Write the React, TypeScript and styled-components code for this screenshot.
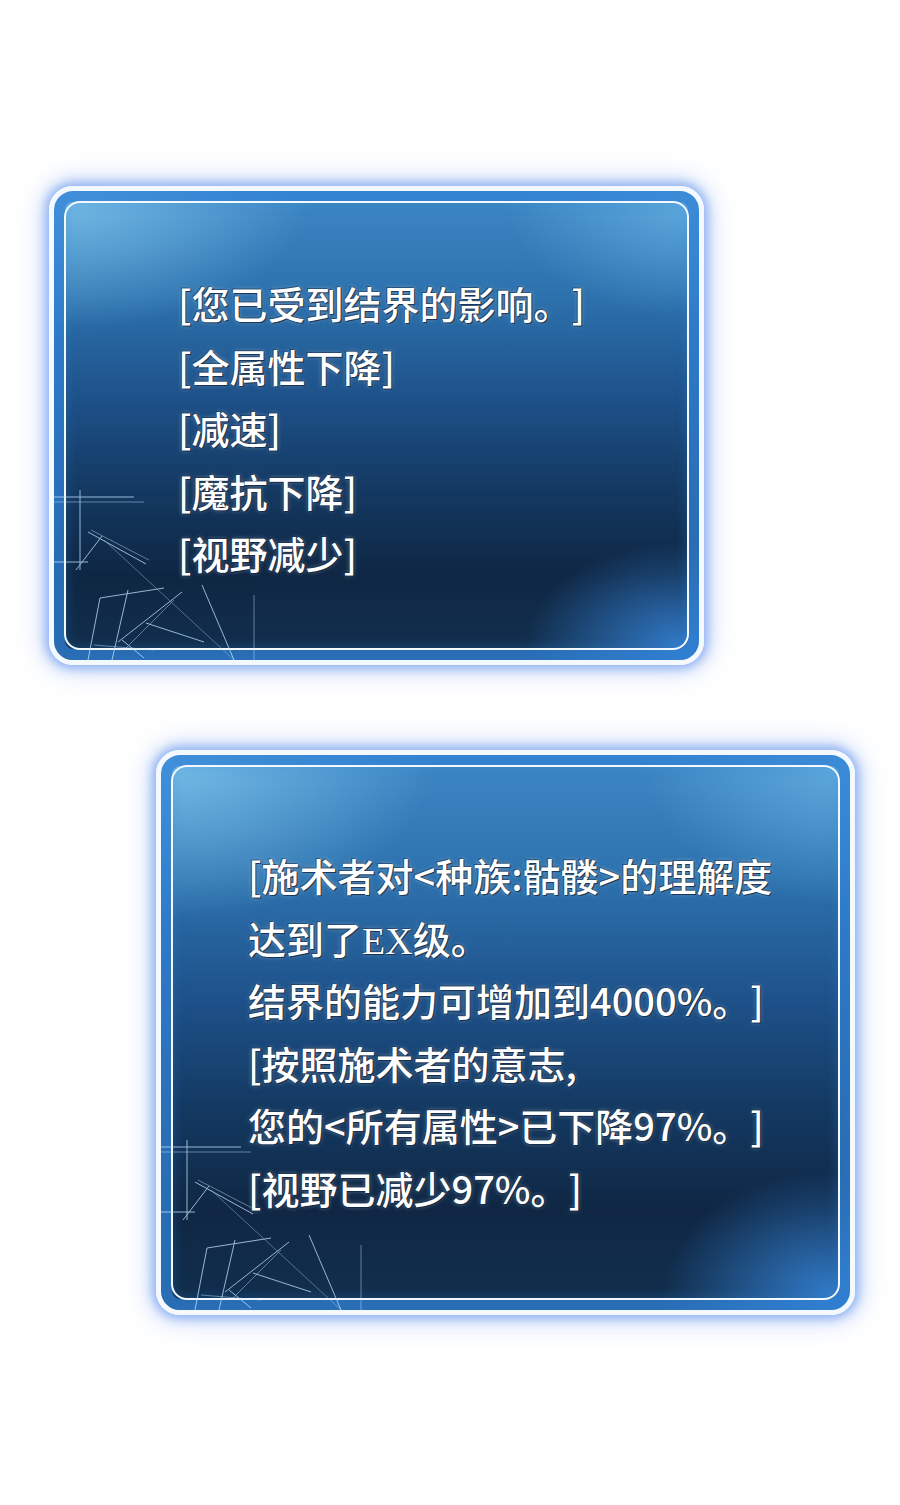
import React, { FC } from 'react';
import styled, { createGlobalStyle } from 'styled-components';

const GlobalStyle = createGlobalStyle`
	html, body {
		margin: 0;
		padding: 0;
		background: #ffffff;
	}
	body {
		font-family: 'Noto Sans CJK SC', 'Noto Sans', sans-serif;
	}
`;

const Page = styled.div`
	width: 900px;
	height: 1505px;
	box-sizing: border-box;
	padding-top: 186px;
	display: flex;
	flex-direction: column;
	gap: 85px;
	background: #ffffff;
	overflow: hidden;
`;

const Panel = styled.div<{ $left: number; $width: number; $height: number; $padTop: number; $padLeft: number }>`
	position: relative;
	box-sizing: border-box;
	margin-left: ${(p) => p.$left}px;
	width: ${(p) => p.$width}px;
	height: ${(p) => p.$height}px;
	padding: ${(p) => p.$padTop}px 20px 0 ${(p) => p.$padLeft}px;
	border: 5px solid #f3f9ff;
	border-radius: 24px;
	box-shadow:
		0 0 10px 4px rgba(90, 140, 235, 0.55),
		0 0 24px 8px rgba(120, 160, 240, 0.35),
		inset 0 0 0 11px rgba(48, 128, 212, 0.7),
		inset 0 0 12px 13px rgba(55, 140, 220, 0.25);
	background:
		radial-gradient(ellipse 24% 22% at 97% 97%, rgba(55, 135, 220, 0.85) 0%, rgba(55, 135, 220, 0) 100%),
		radial-gradient(ellipse 40% 30% at 0% 0%, rgba(140, 210, 245, 0.75) 0%, rgba(140, 210, 245, 0) 100%),
		radial-gradient(ellipse 30% 25% at 100% 2%, rgba(120, 195, 240, 0.6) 0%, rgba(120, 195, 240, 0) 100%),
		linear-gradient(180deg, #3e88c6 0%, #2d72ae 22%, #1d5088 45%, #143a63 63%, #0f2744 82%, #12304f 100%);
	overflow: hidden;

	&::before {
		content: '';
		position: absolute;
		inset: 10px;
		border: 2px solid #f3f9ff;
		border-radius: 16px;
		pointer-events: none;
	}
`;

const Lines = styled.svg`
	position: absolute;
	left: 0;
	bottom: 0;
	width: 260px;
	height: 200px;
	pointer-events: none;
`;

const TextBlock = styled.div`
	position: relative;
	display: flex;
	flex-direction: column;
`;

const Line = styled.div`
	font-family: 'Noto Sans CJK SC', 'Noto Sans', sans-serif;
	font-size: 38px;
	font-weight: 500;
	line-height: 62.5px;
	height: 62.5px;
	color: #ffffff;
	white-space: nowrap;
	text-spacing-trim: space-all;
	font-kerning: none;
	text-shadow:
		0 0 1px #0e2540,
		1px 1px 1px rgba(10, 30, 60, 0.8),
		-1px -1px 1px rgba(10, 30, 60, 0.5),
		0 0 4px rgba(255, 255, 255, 0.45);
`;

const Serif = styled.span`
	font-family: 'Liberation Serif', 'DejaVu Serif', serif;
	font-weight: 400;
`;

const Decoration: FC = () => (
	<Lines viewBox="0 0 260 200">
		<g stroke="#c4e6ff" strokeWidth="1" fill="none" opacity="0.75">
			<line x1="0" y1="37" x2="80" y2="37" />
			<line x1="0" y1="42" x2="90" y2="42" opacity="0.6" />
			<line x1="26" y1="30" x2="26" y2="110" />
			<line x1="0" y1="102" x2="34" y2="102" />
			<line x1="34" y1="72" x2="92" y2="104" />
			<line x1="37" y1="70" x2="95" y2="100" opacity="0.6" />
			<line x1="48" y1="76" x2="22" y2="110" />
			<line x1="46" y1="138" x2="110" y2="128" />
			<line x1="46" y1="138" x2="34" y2="200" />
			<line x1="74" y1="130" x2="58" y2="200" />
			<line x1="128" y1="132" x2="64" y2="182" />
			<line x1="120" y1="140" x2="70" y2="190" opacity="0.6" />
			<line x1="50" y1="80" x2="180" y2="200" opacity="0.5" />
			<line x1="148" y1="125" x2="180" y2="200" />
			<line x1="200" y1="135" x2="200" y2="200" opacity="0.6" />
			<line x1="68" y1="180" x2="90" y2="198" />
			<line x1="92" y1="163" x2="150" y2="182" />
			<line x1="40" y1="185" x2="100" y2="190" opacity="0.6" />
		</g>
	</Lines>
);

const App: FC = () => {
	const first = ['[您已受到结界的影响。]', '[全属性下降]', '[减速]', '[魔抗下降]', '[视野减少]'];

	return (
		<>
			<GlobalStyle />
			<Page>
				<Panel $left={49} $width={655} $height={479} $padTop={81} $padLeft={124}>
					<Decoration />
					<TextBlock>
						{first.map((t) => (
							<Line key={t}>{t}</Line>
						))}
					</TextBlock>
				</Panel>
				<Panel $left={156} $width={699} $height={565} $padTop={89} $padLeft={87}>
					<Decoration />
					<TextBlock>
						<Line>[施术者对&lt;种族:骷髅&gt;的理解度</Line>
						<Line>
							达到了<Serif>EX</Serif>级。
						</Line>
						<Line>结界的能力可增加到4000%。]</Line>
						<Line>[按照施术者的意志,</Line>
						<Line>您的&lt;所有属性&gt;已下降97%。]</Line>
						<Line>[视野已减少97%。]</Line>
					</TextBlock>
				</Panel>
			</Page>
		</>
	);
};

export default App;
